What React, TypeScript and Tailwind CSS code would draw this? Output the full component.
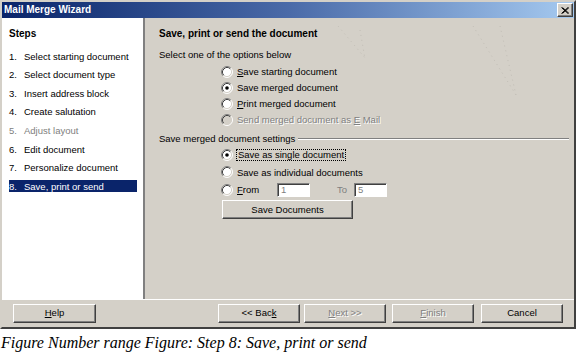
import React from "react";

function Radio({ checked = false, disabled = false }: { checked?: boolean; disabled?: boolean }) {
  return (
    <svg width="12" height="12" viewBox="0 0 12 12" className="shrink-0" aria-hidden="true">
      <circle cx="6" cy="6" r="5" fill={disabled ? "#d4d0c8" : "#ffffff"} />
      <path d="M2.11 9.89 A5.5 5.5 0 0 1 9.89 2.11" fill="none" stroke="#808080" strokeWidth="1" />
      <path d="M9.89 2.11 A5.5 5.5 0 0 1 2.11 9.89" fill="none" stroke="#ffffff" strokeWidth="1" />
      <path d="M2.82 9.18 A4.5 4.5 0 0 1 9.18 2.82" fill="none" stroke="#404040" strokeWidth="1" />
      <path d="M9.18 2.82 A4.5 4.5 0 0 1 2.82 9.18" fill="none" stroke="#d4d0c8" strokeWidth="1" />
      {checked && <circle cx="6" cy="6" r="1.8" fill="#000000" />}
    </svg>
  );
}

function Btn({
  children,
  disabled = false,
  className = "",
}: {
  children: React.ReactNode;
  disabled?: boolean;
  className?: string;
}) {
  return (
    <div
      className={
        "flex items-center justify-center h-[19px] bg-[#d4d0c8] border border-t-white border-l-white border-r-[#404040] border-b-[#404040] shadow-[inset_-1px_-1px_0_#808080] text-[9.5px] " +
        (disabled ? "text-[#808080] [text-shadow:1px_1px_0_#ffffff] " : "text-black ") +
        className
      }
    >
      {children}
    </div>
  );
}

function Field({ value }: { value: string }) {
  return (
    <div className="h-[14px] w-[33px] bg-white border border-t-[#808080] border-l-[#808080] border-r-white border-b-white shadow-[inset_1px_1px_0_#404040] pl-[3px] flex items-center text-[9.5px] text-[#808080] leading-none">
      {value}
    </div>
  );
}

const steps = [
  "Select starting document",
  "Select document type",
  "Insert address block",
  "Create salutation",
  "Adjust layout",
  "Edit document",
  "Personalize document",
  "Save, print or send",
];

export default function App() {
  return (
    <div className="w-[577px] h-[353px] bg-white overflow-hidden font-['Liberation_Sans',Arial,sans-serif]">
      {/* Dialog window */}
      <div className="w-[576px] h-[329px] flex flex-col border-t-2 border-l-2 border-t-[#d4d0c8] border-l-[#d4d0c8] border-r-2 border-b-2 border-r-[#404040] border-b-[#404040] bg-[#d4d0c8]">
        {/* Title bar */}
        <div className="h-[16px] shrink-0 flex items-center justify-between pl-[2px] pr-[1px] bg-gradient-to-r from-[#0a246a] via-[#4a6aa8] to-[#a6caf0]">
          <span className="text-white font-bold text-[10px] leading-none">Mail Merge Wizard</span>
          <div className="w-[16px] h-[14px] bg-[#d4d0c8] border border-t-white border-l-white border-r-[#404040] border-b-[#404040] shadow-[inset_-1px_-1px_0_#808080] flex items-center justify-center">
            <svg width="8" height="7" viewBox="0 0 8 7" aria-hidden="true">
              <path d="M0.5 0.5 L7 6.5 M1.5 0.5 L8 6.5 M7 0.5 L0.5 6.5 M8 0.5 L1.5 6.5" stroke="#000" strokeWidth="1" />
            </svg>
          </div>
        </div>

        {/* Body */}
        <div className="h-[281px] shrink-0 flex">
          {/* Steps panel */}
          <div className="w-[143px] shrink-0 bg-white border-r-2 border-r-[#808080] flex flex-col">
            <div className="h-[14px] mt-[8px] pl-[7px] flex items-center font-bold text-[10px]">Steps</div>
            <div className="mt-[7px] flex flex-col">
              {steps.map((s, i) => {
                const active = i === 7;
                const disabled = i === 4;
                return (
                  <div key={s} className="h-[18.6px] flex items-center">
                    <div
                      className={
                        "ml-[7px] w-[128px] h-[12px] flex items-center text-[9.5px] leading-none " +
                        (active ? "bg-[#0a246a] text-white " : disabled ? "text-[#808080] " : "text-black ")
                      }
                    >
                      <span className="w-[15px] shrink-0">{i + 1}.</span>
                      <span>{s}</span>
                    </div>
                  </div>
                );
              })}
            </div>
          </div>

          {/* Content panel */}
          <div className="relative flex-1 flex flex-col pl-[14px] pr-[5px] text-[9.5px] leading-none">
            <svg className="absolute left-0 top-0 pointer-events-none" width="429" height="100" aria-hidden="true">
              <g stroke="#c2beb6" strokeWidth="1" strokeDasharray="1 4" fill="none">
                <line x1="193" y1="8" x2="221" y2="41" />
                <line x1="215" y1="12" x2="220" y2="41" />
                <line x1="328" y1="8" x2="371" y2="77" />
                <line x1="355" y1="8" x2="371" y2="77" />
              </g>
            </svg>

            <div className="h-[14px] mt-[9px] flex items-center font-bold text-[10px]">
              Save, print or send the document
            </div>
            <div className="h-[14px] mt-[7px] flex items-center">Select one of the options below</div>

            <div className="ml-[62px] flex flex-col mt-[2px]">
              <div className="h-[16px] flex items-center gap-[4px]">
                <Radio />
                <span>
                  <u>S</u>ave starting document
                </span>
              </div>
              <div className="h-[16px] flex items-center gap-[4px]">
                <Radio checked />
                <span>Save merged document</span>
              </div>
              <div className="h-[16px] flex items-center gap-[4px]">
                <Radio />
                <span>
                  <u>P</u>rint merged document
                </span>
              </div>
              <div className="h-[16px] flex items-center gap-[4px]">
                <Radio disabled />
                <span className="text-[#808080] [text-shadow:1px_1px_0_#ffffff]">
                  Send merged document as <u>E</u> Mail
                </span>
              </div>
            </div>

            <div className="h-[14px] mt-[4px] flex items-center">
              <span className="whitespace-nowrap">Save merged document settings</span>
              <div className="flex-1 ml-[3px] h-[2px] border-t border-t-[#808080] border-b border-b-white" />
            </div>

            <div className="ml-[62px] flex flex-col">
              <div className="h-[17.5px] flex items-center gap-[3px]">
                <Radio checked />
                <span className="border border-dotted border-black px-[1px] h-[12px] flex items-center">
                  Save as single document
                </span>
              </div>
              <div className="h-[17.5px] flex items-center gap-[4px]">
                <Radio />
                <span>Save as individual documents</span>
              </div>
              <div className="h-[17.5px] flex items-center">
                <Radio />
                <span className="ml-[4px] w-[40px]">
                  <u>F</u>rom
                </span>
                <Field value="1" />
                <span className="ml-[27px] w-[17px] text-[#808080]">To</span>
                <Field value="5" />
              </div>
            </div>

            <Btn className="ml-[63px] mt-[1.5px] w-[131px] h-[18px]">Save Documents</Btn>
          </div>
        </div>

        {/* Button bar */}
        <div className="flex-1 border-t border-t-white flex items-start pt-[4px] pl-[11px]">
          <Btn className="w-[83px]">
            <span>
              <u>H</u>elp
            </span>
          </Btn>
          <Btn className="w-[82px] ml-[122px]">
            <span>
              &lt;&lt; Bac<u>k</u>
            </span>
          </Btn>
          <Btn disabled className="w-[82px] ml-[4px]">
            <span>
              <u>N</u>ext &gt;&gt;
            </span>
          </Btn>
          <Btn disabled className="w-[82px] ml-[6px]">
            <span>
              <u>F</u>inish
            </span>
          </Btn>
          <Btn className="w-[82px] ml-[7px]">Cancel</Btn>
        </div>
      </div>

      {/* Caption */}
      <div className="h-[24px] flex items-center pt-[4px] pl-[1px] font-['Liberation_Serif','Times_New_Roman',serif] italic text-[16px] text-black">
        Figure Number range Figure: Step 8: Save, print or send
      </div>
    </div>
  );
}
